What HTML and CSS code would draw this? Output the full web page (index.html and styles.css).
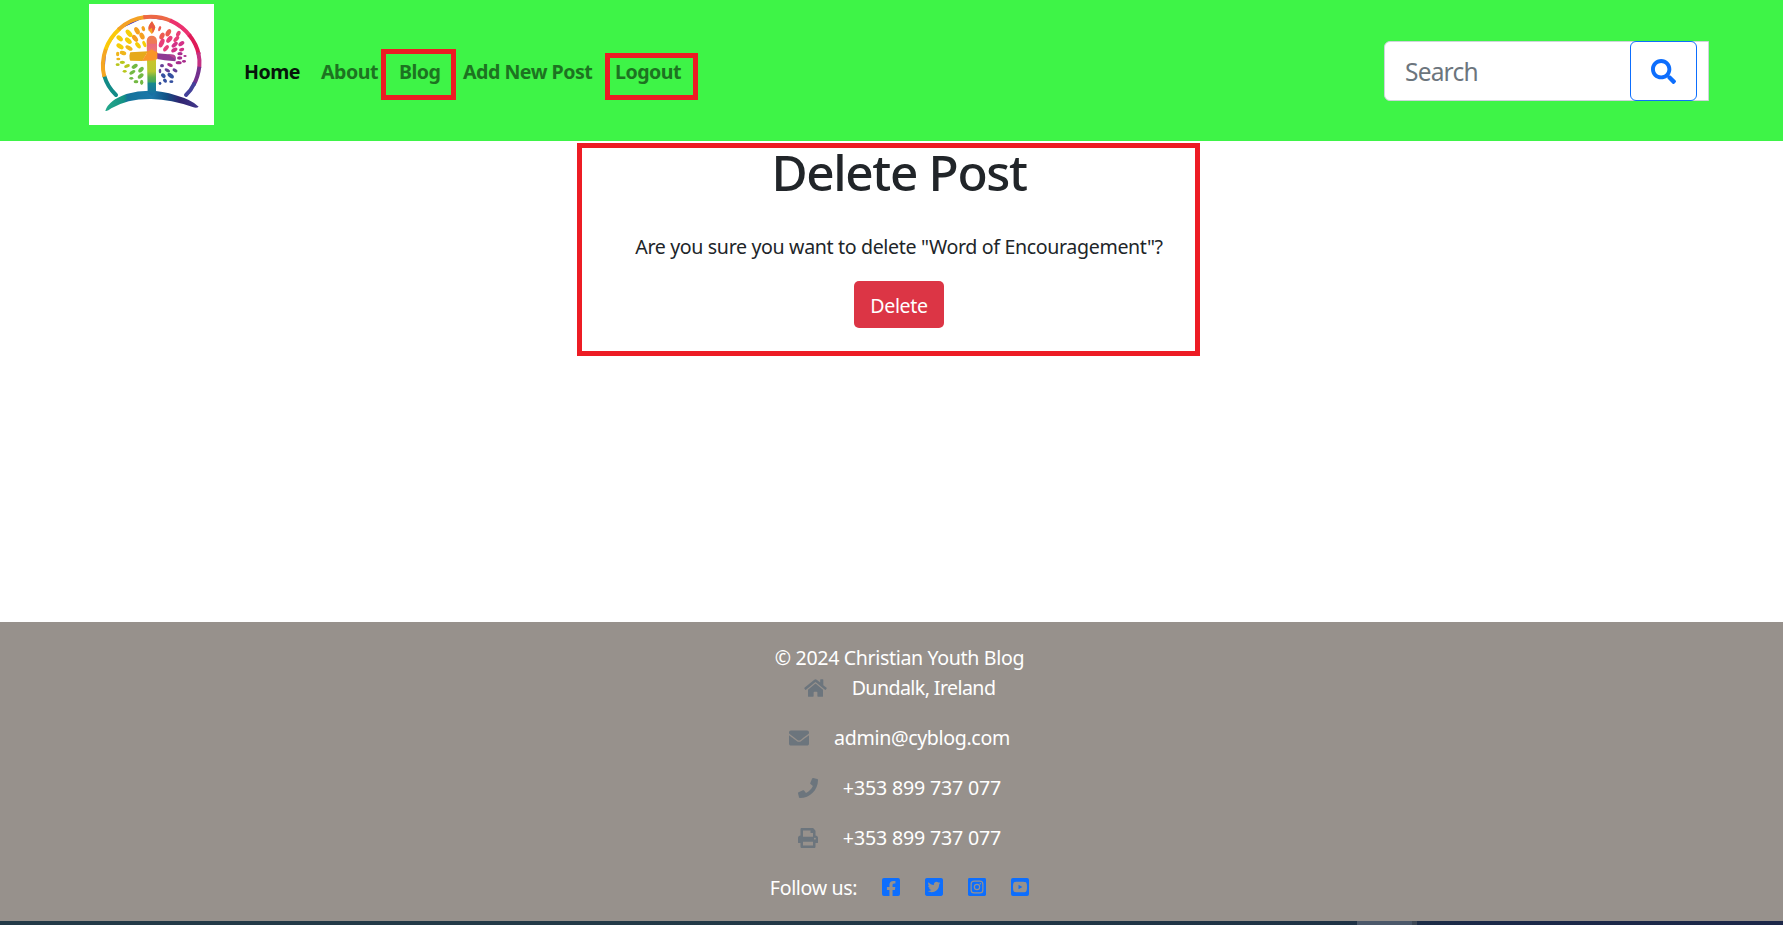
FILE: index.html
```html
<!DOCTYPE html>
<html lang="en">
<head>
<meta charset="utf-8">
<title>Delete Post</title>
<link rel="stylesheet" href="styles.css">
</head>
<body>
<header class="navbar">
  <a class="brand" href="#">
    <svg viewBox="27 12 375 363" preserveAspectRatio="none" fill="none">
      <defs>
        <linearGradient id="hill" x1="76" y1="0" x2="355" y2="0" gradientUnits="userSpaceOnUse"><stop stop-color="#25a98b"/><stop offset=".2" stop-color="#149184"/><stop offset=".24" stop-color="#15739b"/><stop offset=".5" stop-color="#1b78aa"/><stop offset=".65" stop-color="#105488"/><stop offset=".8" stop-color="#302570"/><stop offset="1" stop-color="#42378b"/></linearGradient>
        <linearGradient id="post" x1="0" y1="107" x2="0" y2="285" gradientUnits="userSpaceOnUse"><stop stop-color="#f07d4f"/><stop offset=".13" stop-color="#ee7958"/><stop offset=".14" stop-color="#e86b80"/><stop offset=".26" stop-color="#ef7773"/><stop offset=".28" stop-color="#f98b21"/><stop offset=".4" stop-color="#f5a229"/><stop offset=".42" stop-color="#c8c52c"/><stop offset=".6" stop-color="#bac631"/><stop offset=".7" stop-color="#61b04b"/><stop offset=".78" stop-color="#43a65d"/><stop offset=".8" stop-color="#16898f"/><stop offset="1" stop-color="#166fa5"/></linearGradient>
      </defs>
      <path fill="#fff" d="M27 12h375v363H27z"/>
      <g stroke-width="12">
        <path stroke="#128b87" stroke-linecap="round" d="M108 285Q82 260 73 228"/>
        <path stroke="#f5a623" d="M73 230C65 200 69 170 78 145"/>
        <path stroke="#fbc909" d="M77 148Q89 113 119 86"/>
        <path stroke="#f4a225" d="M115 89Q150 56 197 51"/>
        <path stroke="#ed6845" d="M190 52Q235 46 274 63"/>
        <path stroke="#ec316f" d="M270 61Q308 78 330 108"/>
        <path stroke="#df1b58" d="M327 104Q350 132 356 163"/>
        <path stroke="#c43183" d="M355 157Q360 180 358 202"/>
        <path stroke="#73308d" d="M358 200Q354 231 341 254"/>
        <path stroke="#44419a" stroke-linecap="round" d="M342 252Q334 270 318 285"/>
      </g>
      <path fill="url(#hill)" d="M76 332Q86 301 139 282Q215 261 287 286Q334 299 356 320Q350 326 338 321Q275 299 214 297Q142 296 94 325Q81 335 76 332Z"/>
      <path fill="url(#post)" d="M200 122Q202 107 215 107Q229 107 231 122V156L239 168L228 180V277L216 288L203 279Z"/>
      <path fill="#e6a91a" d="M151 157Q145 170 151 182L187 183L204 154Z"/>
      <path fill="#fa9528" d="M186 183L204 154L216 148L239 166L222 181Z"/>
      <path fill="#8f3993" d="M232 160L281 164Q291 168 286 184L254 181L232 177Z"/>
      <path fill="#b7438f" d="M262 162L283 165L286 177Z"/>
      <path fill="#f6a91c" d="M216 64Q202 80 206 91L215 102Q228 88 225 78Z"/>
      <path fill="#e95943" d="M216 64L226 82L218 101L216 83L206 90Q203 77 216 64Z"/>
      <g>
        <g fill="#f5a01f"><ellipse cx="171" cy="92" rx="7" ry="12" transform="rotate(-28 171 92)"/><ellipse cx="190" cy="86" rx="5" ry="8" transform="rotate(-20 190 86)"/><ellipse cx="165" cy="115" rx="7" ry="12" transform="rotate(-38 165 115)"/><ellipse cx="186" cy="108" rx="7" ry="11" transform="rotate(-25 186 108)"/></g>
        <g fill="#f5cd08"><ellipse cx="147" cy="100" rx="7" ry="13" transform="rotate(-42 147 100)"/><ellipse cx="145" cy="122" rx="7" ry="12" transform="rotate(-48 145 122)"/><ellipse cx="119" cy="115" rx="7" ry="11" transform="rotate(-50 119 115)"/><ellipse cx="174" cy="136" rx="6" ry="11" transform="rotate(-38 174 136)"/><ellipse cx="120" cy="139" rx="7" ry="12" transform="rotate(-57 120 139)"/><ellipse cx="193" cy="132" rx="5" ry="10" transform="rotate(-22 193 132)"/></g>
        <g fill="#efb51b"><ellipse cx="147" cy="144" rx="6" ry="12" transform="rotate(-58 147 144)"/><ellipse cx="129" cy="159" rx="6" ry="10" transform="rotate(-72 129 159)"/><ellipse cx="113" cy="162" rx="5" ry="7"/><ellipse cx="115" cy="177" rx="6" ry="4"/></g>
        <g fill="#b8c61c"><ellipse cx="127" cy="187" rx="8" ry="5"/><ellipse cx="113" cy="194" rx="6" ry="4"/><ellipse cx="141" cy="198" rx="9" ry="5" transform="rotate(-20 141 198)"/><ellipse cx="134" cy="214" rx="6" ry="4"/></g>
        <g fill="#73b943"><ellipse cx="164" cy="199" rx="10" ry="6" transform="rotate(-32 164 199)"/><ellipse cx="157" cy="217" rx="10" ry="5" transform="rotate(-32 157 217)"/><ellipse cx="183" cy="209" rx="10" ry="6" transform="rotate(-48 183 209)"/><ellipse cx="182" cy="228" rx="10" ry="6" transform="rotate(-40 182 228)"/><ellipse cx="154" cy="235" rx="6" ry="4"/><ellipse cx="168" cy="245" rx="7" ry="5"/><ellipse cx="185" cy="247" rx="5" ry="8"/></g>
      </g>
      <g>
        <g fill="#ed5b50"><ellipse cx="239" cy="86" rx="4" ry="8" transform="rotate(20 239 86)"/><ellipse cx="246" cy="108" rx="7" ry="11" transform="rotate(25 246 108)"/><ellipse cx="265" cy="98" rx="7" ry="12" transform="rotate(28 265 98)"/></g>
        <g fill="#e93e79"><ellipse cx="245" cy="129" rx="7" ry="14" transform="rotate(25 245 129)"/><ellipse cx="268" cy="118" rx="7" ry="12" transform="rotate(38 268 118)"/><ellipse cx="295" cy="101" rx="6" ry="9" transform="rotate(28 295 101)"/><ellipse cx="289" cy="117" rx="6" ry="11" transform="rotate(42 289 117)"/><ellipse cx="258" cy="145" rx="6" ry="11" transform="rotate(40 258 145)"/></g>
        <g fill="#d33187"><ellipse cx="284" cy="134" rx="6" ry="11" transform="rotate(50 284 134)"/><ellipse cx="304" cy="131" rx="6" ry="10" transform="rotate(54 304 131)"/><ellipse cx="283" cy="150" rx="6" ry="10" transform="rotate(60 283 150)"/><ellipse cx="305" cy="149" rx="5" ry="8" transform="rotate(70 305 149)"/></g>
        <g fill="#a82b8c"><ellipse cx="300" cy="161" rx="8" ry="5"/><ellipse cx="315" cy="168" rx="5" ry="3"/><ellipse cx="299" cy="174" rx="8" ry="5"/><ellipse cx="312" cy="184" rx="6" ry="4"/><ellipse cx="296" cy="188" rx="9" ry="5"/><ellipse cx="270" cy="195" rx="9" ry="5" transform="rotate(25 270 195)"/></g>
        <g fill="#644096"><ellipse cx="246" cy="197" rx="6" ry="5"/><ellipse cx="262" cy="211" rx="9" ry="5" transform="rotate(30 262 211)"/><ellipse cx="285" cy="211" rx="8" ry="5" transform="rotate(30 285 211)"/><ellipse cx="240" cy="213" rx="4" ry="7"/></g>
        <g fill="#3450a0"><ellipse cx="250" cy="227" rx="8" ry="6" transform="rotate(45 250 227)"/><ellipse cx="272" cy="227" rx="11" ry="6" transform="rotate(38 272 227)"/><ellipse cx="255" cy="242" rx="7" ry="5" transform="rotate(50 255 242)"/><ellipse cx="274" cy="245" rx="6" ry="4"/><ellipse cx="240" cy="250" rx="4" ry="5"/></g>
      </g>
    </svg>
  </a>
  <nav class="links">
    <a class="active home" href="#">Home</a>
    <a class="about" href="#">About</a>
    <a class="marked blog" href="#">Blog</a>
    <a class="add" href="#">Add New Post</a>
    <a class="marked logout" href="#">Logout</a>
  </nav>
  <form class="search">
    <span class="placeholder">Search</span>
    <button type="button" aria-label="Search"><svg viewBox="0 0 512 512"><path d="M505 442.700 405.300 343c-4.500-4.500-10.600-7-17-7H372c27.600-35.300 44-79.700 44-128C416 93.100 322.900 0 208 0S0 93.100 0 208s93.100 208 208 208c48.300 0 92.700-16.400 128-44v16.300c0 6.400 2.500 12.500 7 17l99.700 99.700c9.400 9.400 24.600 9.400 33.900 0l28.300-28.300c9.400-9.400 9.400-24.600.1-34zM208 336c-70.700 0-128-57.200-128-128 0-70.700 57.200-128 128-128 70.700 0 128 57.200 128 128 0 70.700-57.200 128-128 128z"/></svg></button>
  </form>
</header>
<main>
  <section class="confirm">
    <h1>Delete Post</h1>
    <p>Are you sure you want to delete "Word of Encouragement"?</p>
    <button type="button">Delete</button>
  </section>
</main>
<footer>
  <div class="row copy"><span>© 2024 Christian Youth Blog</span></div>
  <div class="row place"><svg class="w23" viewBox="0 0 576 512"><path d="M280.370 148.260 96 300.110V464a16 16 0 0 0 16 16l112.060-.29a16 16 0 0 0 15.920-16V368a16 16 0 0 1 16-16h64a16 16 0 0 1 16 16v95.640a16 16 0 0 0 16 16.050L464 480a16 16 0 0 0 16-16V300L295.670 148.260a12.190 12.190 0 0 0-15.300 0zM571.600 251.470 488 182.560V44.050a12 12 0 0 0-12-12h-56a12 12 0 0 0-12 12v72.610L318.470 43a48 48 0 0 0-61 0L4.340 251.470a12 12 0 0 0-1.600 16.900l25.500 31A12 12 0 0 0 45.150 301l235.220-193.740a12.190 12.190 0 0 1 15.300 0L530.900 301a12 12 0 0 0 16.900-1.600l25.500-31a12 12 0 0 0-1.700-16.930z"/></svg><span>Dundalk, Ireland</span></div>
  <div class="row mail"><svg class="w20" viewBox="0 0 512 512"><path d="M502.300 190.800c3.900-3.100 9.700-.2 9.700 4.700V400c0 26.500-21.500 48-48 48H48c-26.500 0-48-21.500-48-48V195.600c0-5 5.700-7.800 9.700-4.700 22.400 17.400 52.100 39.500 154.100 113.600 21.100 15.400 56.700 47.800 92.200 47.600 35.700.3 72-32.800 92.300-47.600 102-74.100 131.600-96.300 154-113.700zM256 320c23.200.4 56.600-29.200 73.400-41.400 132.700-96.300 142.800-104.700 173.400-128.700 5.800-4.500 9.200-11.500 9.200-18.900v-19c0-26.500-21.500-48-48-48H48c-26.500 0-48 21.500-48 48v19c0 7.400 3.400 14.300 9.200 18.900 30.600 23.900 40.700 32.400 173.400 128.700 16.800 12.200 50.200 41.800 73.400 41.400z"/></svg><span>admin@cyblog.com</span></div>
  <div class="row tel"><svg class="w20" viewBox="0 0 512 512"><path d="M493.400 24.600l-104-24c-11.300-2.600-22.900 3.300-27.500 13.900l-48 112c-4.200 9.800-1.400 21.300 6.900 28l60.600 49.600c-36 76.700-98.900 140.500-177.200 177.200l-49.600-60.600c-6.800-8.300-18.200-11.100-28-6.900l-112 48C3.900 366.500-2 378.100.6 389.400l24 104C27.100 504.200 36.700 512 48 512c256.100 0 464-207.500 464-464 0-11.200-7.700-20.900-18.600-23.400z"/></svg><span>+353 899 737 077</span></div>
  <div class="row tel"><svg class="w20" viewBox="0 0 512 512"><path d="M448 192V77.250c0-8.490-3.370-16.620-9.370-22.630L393.370 9.370c-6-6-14.140-9.370-22.630-9.370H96C78.330 0 64 14.330 64 32v160c-35.350 0-64 28.650-64 64v112c0 8.840 7.160 16 16 16h48v96c0 17.670 14.330 32 32 32h320c17.670 0 32-14.330 32-32v-96h48c8.840 0 16-7.160 16-16V256c0-35.350-28.650-64-64-64zm-64 256H128v-96h256v96zm0-224H128V64h192v48c0 8.840 7.160 16 16 16h48v96zm48 72c-13.250 0-24-10.750-24-24 0-13.260 10.750-24 24-24s24 10.740 24 24c0 13.250-10.750 24-24 24z"/></svg><span>+353 899 737 077</span></div>
  <div class="row follow"><span>Follow us:</span>
    <a href="#" aria-label="Facebook"><svg viewBox="0 32 448 448"><path d="M400 32H48A48 48 0 0 0 0 80v352a48 48 0 0 0 48 48h137.250V327.690h-63V256h63v-54.640c0-62.150 37-96.480 93.670-96.480 27.140 0 55.520 4.840 55.520 4.840v61h-31.270c-30.810 0-40.420 19.120-40.420 38.730V256h68.780l-11 71.690h-57.780V480H400a48 48 0 0 0 48-48V80a48 48 0 0 0-48-48z"/></svg></a>
    <a href="#" aria-label="Twitter"><svg viewBox="0 32 448 448"><path d="M400 32H48C21.500 32 0 53.500 0 80v352c0 26.500 21.500 48 48 48h352c26.500 0 48-21.500 48-48V80c0-26.500-21.500-48-48-48zm-48.900 158.800c.2 2.800.2 5.700.2 8.500 0 86.700-66 186.600-186.600 186.600-37.200 0-71.700-10.800-100.700-29.400 5.300.6 10.400.8 15.800.8 30.700 0 58.900-10.400 81.400-28-28.800-.6-53-19.500-61.300-45.500 10.100 1.500 19.200 1.500 29.600-1.200-30-6.100-52.500-32.500-52.500-64.400v-.8c8.700 4.900 18.900 7.900 29.600 8.300a65.447 65.447 0 0 1-29.200-54.600c0-12.200 3.200-23.400 8.900-33.100 32.300 39.800 80.800 65.800 135.200 68.600-9.300-44.500 24-80.600 64-80.600 18.900 0 35.900 7.900 47.900 20.700 14.800-2.800 29-8.300 41.600-15.800-4.900 15.200-15.200 28-28.800 36.100 13.200-1.400 26-5.100 37.800-10.200-8.900 13.100-20.100 24.700-32.900 34z"/></svg></a>
    <a href="#" aria-label="Instagram"><svg viewBox="0 32 448 448"><rect y="32" width="448" height="448" rx="36"/><rect class="cut" x="78" y="110" width="292" height="292" rx="74"/><circle class="cut" cx="224" cy="256" r="66"/><circle class="hole" cx="307" cy="173" r="19"/></svg></a>
    <a href="#" aria-label="YouTube"><svg viewBox="0 32 448 448"><path fill-rule="evenodd" d="M48 32h352a48 48 0 0 1 48 48v352a48 48 0 0 1-48 48H48a48 48 0 0 1-48-48V80a48 48 0 0 1 48-48zM224 123c-50 0-115 2-136 8-27 8-38 48-38 125s11 117 38 125c21 6 86 8 136 8s115-2 136-8c27-8 38-48 38-125s-11-117-38-125c-21-6-86-8-136-8zM187 202l95 54-95 54z"/></svg></a>
  </div>
</footer>
<div class="taskbar"><i></i><b></b></div>
</body>
</html>
```

FILE: styles.css
```css
*, *::after { box-sizing: border-box; }
body {
  margin: 0;
  height: 925px;
  overflow: hidden;
  display: flex;
  flex-direction: column;
  background: #fff;
  color: #212529;
  font: 400 19.6px/30px "Noto Sans", "Open Sans", sans-serif;
  letter-spacing: -0.35px;
}
a { text-decoration: none; }
svg { display: block; fill: currentColor; }
button { font: inherit; letter-spacing: inherit; }

.navbar {
  flex: none;
  display: flex;
  align-items: flex-start;
  height: 141px;
  padding: 4px 74px 0 89px;
  background: #3ef447;
}
.brand svg { width: 125px; height: 121px; }
.links {
  display: flex;
  margin-left: 30px;
  padding-top: 53px;
  font-weight: 700;
  letter-spacing: -0.5px;
  white-space: nowrap;
}
.links a { position: relative; color: #1d7321; }
.links .active { color: #06160a; }
.home { width: 77px; }
.about { width: 78px; }
.blog { width: 64px; }
.add { width: 152px; }
.logout { width: 70px; }
.marked::after {
  content: "";
  position: absolute;
  border: 5px solid #ed1c24;
}
.blog::after { left: -18px; top: -8px; width: 75px; height: 51px; }
.logout::after { left: -10px; top: -4px; width: 93px; height: 47px; }

.search {
  display: flex;
  width: 325px;
  height: 60px;
  margin: 37px 0 0 auto;
  padding-left: 20px;
  padding-right: 11px;
  justify-content: space-between;
  background: #fff;
  border: 1px solid #ced4da;
  border-radius: 6px 0 0 6px;
}
.placeholder { color: #6c757d; font-size: 24.500px; line-height: 60px; letter-spacing: -0.8px; }
.search button {
  width: 67px;
  height: 60px;
  margin-top: -1px;
  padding: 0 0 0 20px;
  background: #fff;
  border: 1px solid #0d6efd;
  border-radius: 6px;
  color: #0d6efd;
}
.search svg { width: 25px; height: 25px; }

main { height: 481px; padding: 2px 0 0 577px; }
.confirm {
  width: 623px;
  height: 213px;
  padding-left: 21px;
  border: 5px solid #ed1c24;
  display: flex;
  flex-direction: column;
  align-items: center;
}
h1 { margin: -6px 0 0; font-size: 49.500px; line-height: 60px; font-weight: 500; letter-spacing: -1.35px; white-space: nowrap; }
.confirm p { margin: 30px 0 0; white-space: nowrap; }
.confirm button {
  width: 90px;
  height: 47px;
  margin-top: 19px;
  padding: 2px 0 0;
  border: 0;
  border-radius: 5px;
  background: #dc3545;
  color: #fff;
}

footer {
  height: 299px;
  padding: 21px 0 0 16px;
  background: #97918c;
  color: #fff;
}
.row { display: flex; justify-content: center; align-items: center; height: 30px; margin-bottom: 20px; white-space: nowrap; }
.copy { margin-bottom: 0; }
.place { letter-spacing: -0.58px; }
.tel { letter-spacing: -0.17px; }
.row > svg { color: #6c757d; margin-right: 25px; }
.w23 { width: 23px; height: 20px; }
.w20 { width: 20px; height: 20px; }
.follow a { margin-left: 25px; padding-bottom: 2px; color: #0d6efd; }
.follow svg { width: 18px; height: 18px; }
.hole { fill: #97918c; }
.cut { fill: none; stroke: #97918c; stroke-width: 30px; }

.taskbar { display: flex; height: 4px; padding-left: 1357px; background: linear-gradient(90deg, #233a47 0 35%, #1f3345 75%, #1b2948 83%, #1c2748); }
.taskbar i { width: 55px; background: #4b586a; }
.taskbar b { width: 5px; background: #3d4855; }
```
